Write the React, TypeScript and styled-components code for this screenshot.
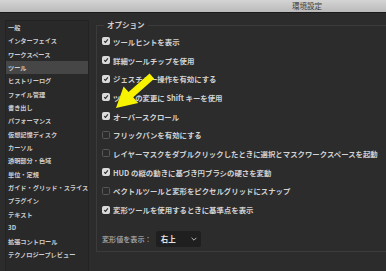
import React, { FC } from "react";
import styled, { createGlobalStyle } from "styled-components";

//******** DATA ********//

const categories = [
  "一般",
  "インターフェイス",
  "ワークスペース",
  "ツール",
  "ヒストリーログ",
  "ファイル管理",
  "書き出し",
  "パフォーマンス",
  "仮想記憶ディスク",
  "カーソル",
  "透明部分・色域",
  "単位・定規",
  "ガイド・グリッド・スライス",
  "プラグイン",
  "テキスト",
  "3D",
  "拡張コントロール",
  "テクノロジープレビュー",
];

const options = [
  { label: "ツールヒントを表示", checked: true },
  { label: "詳細ツールチップを使用", checked: true },
  { label: "ジェスチャー操作を有効にする", checked: true },
  { label: "ツールの変更に Shift キーを使用", checked: true },
  { label: "オーバースクロール", checked: true },
  { label: "フリックパンを有効にする", checked: false },
  { label: "レイヤーマスクをダブルクリックしたときに選択とマスクワークスペースを起動", checked: false },
  { label: "HUD の縦の動きに基づき円ブラシの硬さを変動", checked: true },
  { label: "ベクトルツールと変形をピクセルグリッドにスナップ", checked: false },
  { label: "変形ツールを使用するときに基準点を表示", checked: true },
];

//******** COMPONENTS ********//

const CheckBox: FC<{ checked: boolean }> = ({ checked }) => (
  <SBox $checked={checked}>
    {checked && (
      <svg width="8" height="8" viewBox="0 0 8 8">
        <path d="M1.6 4.1 L3.3 5.8 L6.5 1.9" fill="none" stroke="#2a2a2a" strokeWidth="1.5" />
      </svg>
    )}
  </SBox>
);

const App: FC = () => {
  return (
    <>
      <GlobalStyle />
      <SWindow>
        <STitleBar>環境設定</STitleBar>
        <SBody>
          <SSidebar>
            {categories.map((c) => (
              <SCategory key={c} $selected={c === "ツール"}>
                {c}
              </SCategory>
            ))}
          </SSidebar>
          <SMain>
            <SGroup>
              <SLegend>オプション</SLegend>
              {options.map((o) => (
                <SOption key={o.label}>
                  <CheckBox checked={o.checked} />
                  <span>{o.label}</span>
                </SOption>
              ))}
              <SSelectRow>
                <SSelectLabel>変形値を表示：</SSelectLabel>
                <SSelect>
                  <span>右上</span>
                  <svg width="6" height="4" viewBox="0 0 6 4">
                    <path d="M0.6 0.8 L3 3.2 L5.4 0.8" fill="none" stroke="#bdbdbd" strokeWidth="1" />
                  </svg>
                </SSelect>
              </SSelectRow>
            </SGroup>
          </SMain>
        </SBody>
        <SArrow width="386" height="271" viewBox="0 0 386 271">
          <polygon
            points="116,108 123.6,86.5 128.6,92.1 149.6,73.5 154.2,78.7 133.2,97.3 138.2,102.9"
            fill="#f7f200"
          />
        </SArrow>
      </SWindow>
    </>
  );
};

export default App;

//******** STYLES ********//

const GlobalStyle = createGlobalStyle`
  html, body {
    margin: 0;
    padding: 0;
    background: #2c2c2c;
  }
  body {
    font-family: "Noto Sans CJK JP", "Noto Sans", sans-serif;
  }
`;

const SWindow = styled.div`
  position: relative;
  width: 386px;
  height: 271px;
  overflow: hidden;
  display: flex;
  flex-direction: column;
  background: #2c2c2c;
`;

const STitleBar = styled.div`
  height: 12px;
  flex-shrink: 0;
  background: linear-gradient(#d4d4d4, #bababa);
  border-bottom: 1px solid #1a1a1a;
  color: #3c3c3c;
  font-size: 7.5px;
  line-height: 12px;
  padding-left: 292px;
`;

const SBody = styled.div`
  flex: 1;
  display: flex;
  gap: 7px;
  padding: 7px 0 0 5px;
  min-height: 0;
`;

const SSidebar = styled.div`
  width: 84px;
  flex-shrink: 0;
  background: #292929;
  border: 1px solid #232323;
  border-bottom: none;
  padding-top: 0px;
  box-sizing: border-box;
`;

const SCategory = styled.div<{ $selected: boolean }>`
  height: 13.35px;
  line-height: 13.35px;
  padding-left: 2px;
  font-size: 6.2px;
  font-weight: 700;
  color: #cdcdcd;
  white-space: nowrap;
  background: ${(p) => (p.$selected ? "#464646" : "transparent")};
`;

const SMain = styled.div`
  flex: 1;
  padding-top: 0;
  margin-right: -20px;
`;

const SGroup = styled.fieldset`
  margin: 0;
  padding: 2px 0 0 5px;
  height: 232px;
  box-sizing: border-box;
  border: 1px solid #3b3b3b;
  border-radius: 0;
  display: flex;
  flex-direction: column;
`;

const SLegend = styled.legend`
  padding: 0 3px;
  margin-left: 2px;
  font-size: 7.5px;
  line-height: 10px;
  font-weight: 700;
  color: #cfcfcf;
`;

const SOption = styled.div`
  height: 18.7px;
  display: flex;
  align-items: center;
  gap: 3px;
  font-size: 7.4px;
  font-weight: 700;
  color: #d2d2d2;
  white-space: nowrap;
`;

const SBox = styled.span<{ $checked: boolean }>`
  width: 8px;
  height: 8px;
  flex-shrink: 0;
  box-sizing: border-box;
  border-radius: 1.5px;
  display: flex;
  align-items: center;
  justify-content: center;
  background: ${(p) => (p.$checked ? "#dadada" : "#2c2c2c")};
  border: 1px solid ${(p) => (p.$checked ? "#dadada" : "#585858")};
`;

const SSelectRow = styled.div`
  margin-top: 12px;
  display: flex;
  align-items: center;
  gap: 4px;
`;

const SSelectLabel = styled.span`
  font-size: 7.1px;
  font-weight: 700;
  color: #9a9a9a;
`;

const SSelect = styled.div`
  width: 45px;
  height: 16px;
  box-sizing: border-box;
  padding: 0 4px 0 5px;
  border-radius: 2px;
  background: #1f1f1f;
  display: flex;
  align-items: center;
  justify-content: space-between;
  font-size: 7.5px;
  font-weight: 700;
  color: #e4e4e4;
`;

const SArrow = styled.svg`
  position: absolute;
  left: 0;
  top: 0;
  pointer-events: none;
`;
